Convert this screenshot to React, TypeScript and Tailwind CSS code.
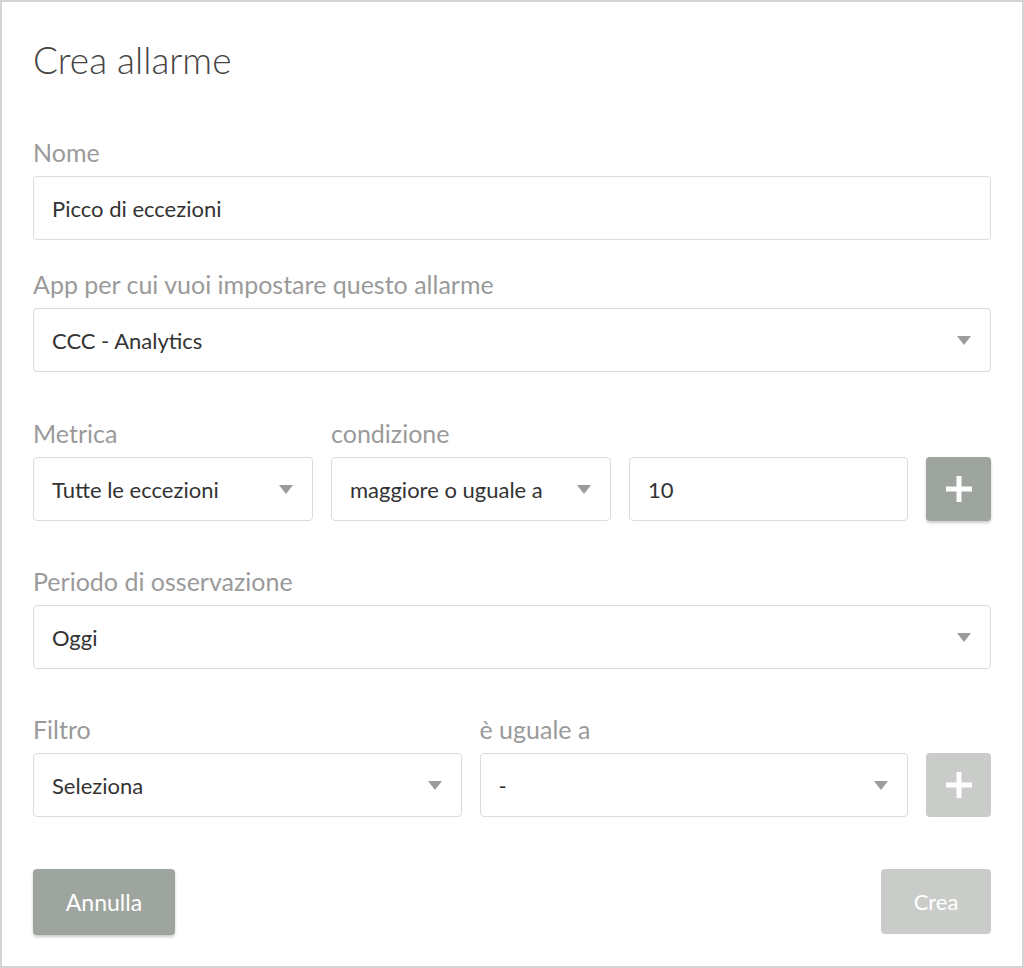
import React from "react";

const font = { fontFamily: "Lato, 'Noto Sans', sans-serif" };

const Label = ({ children }: { children: React.ReactNode }) => (
    <div className="h-[32px] mb-[8px] text-[25px] leading-[32px] text-[#9a9a9a] whitespace-nowrap">{children}</div>
);

const Arrow = () => (
    <svg width="14" height="9" viewBox="0 0 14 9" className="shrink-0">
        <path d="M0 0 L14 0 L7 9 Z" fill="#9b9b9b" />
    </svg>
);

const Field = ({ value, select, className = "" }: { value: string; select?: boolean; className?: string }) => (
    <div
        className={
            "h-[64px] flex flex-row items-center justify-between border border-[#dcdcdc] rounded-[4px] bg-white pl-[18px] pr-[19px] text-[22px] text-[#333] " +
            className
        }
    >
        <span className="whitespace-nowrap">{value}</span>
        {select && <Arrow />}
    </div>
);

const Plus = ({ disabled }: { disabled?: boolean }) => (
    <div
        className={
            "w-[65px] h-[64px] shrink-0 rounded-[4px] flex items-center justify-center " +
            (disabled ? "bg-[#c9ccc8]" : "bg-[#9ea59e] shadow-[0_2px_3px_rgba(0,0,0,0.2)]")
        }
    >
        <svg width="26" height="26" viewBox="0 0 26 26">
            <rect x="10.5" y="0" width="5" height="26" fill="#fff" />
            <rect x="0" y="10.5" width="26" height="5" fill="#fff" />
        </svg>
    </div>
);

export default function App() {
    return (
        <div style={font} className="w-[1024px] h-[968px] bg-white border-2 border-[#d4d4d4] pl-[31px] pr-[31px] pt-[36px]">
            <div className="h-[44px] text-[37px] leading-[44px] font-light text-[#444]">Crea allarme</div>
            <div className="mt-[54px]">
                <Label>Nome</Label>
                <Field value="Picco di eccezioni" />
            </div>
            <div className="mt-[28px]">
                <Label>App per cui vuoi impostare questo allarme</Label>
                <Field value="CCC - Analytics" select />
            </div>
            <div className="mt-[45px] flex flex-row gap-[18px]">
                <div className="w-[280px]">
                    <Label>Metrica</Label>
                    <Field value="Tutte le eccezioni" select />
                </div>
                <div className="w-[280px]">
                    <Label>condizione</Label>
                    <Field value="maggiore o uguale a" select className="pr-[17px]" />
                </div>
                <div className="flex-1 flex flex-col">
                    <div className="h-[32px] mb-[8px]" />
                    <Field value="10" />
                </div>
                <div className="flex flex-col">
                    <div className="h-[32px] mb-[8px]" />
                    <Plus />
                </div>
            </div>
            <div className="mt-[44px]">
                <Label>Periodo di osservazione</Label>
                <Field value="Oggi" select />
            </div>
            <div className="mt-[44px] flex flex-row gap-[18px]">
                <div className="flex-1">
                    <Label>Filtro</Label>
                    <Field value="Seleziona" select />
                </div>
                <div className="flex-1">
                    <Label>è uguale a</Label>
                    <Field value="-" select />
                </div>
                <div className="flex flex-col">
                    <div className="h-[32px] mb-[8px]" />
                    <Plus disabled />
                </div>
            </div>
            <div className="mt-[52px] flex flex-row justify-between">
                <div className="w-[142px] h-[66px] rounded-[4px] bg-[#9ea59e] shadow-[0_2px_3px_rgba(0,0,0,0.2)] flex items-center justify-center text-[23px] text-white">
                    Annulla
                </div>
                <div className="w-[110px] h-[65px] rounded-[4px] bg-[#c9ccc8] flex items-center justify-center text-[22px] text-white">
                    Crea
                </div>
            </div>
        </div>
    );
}
